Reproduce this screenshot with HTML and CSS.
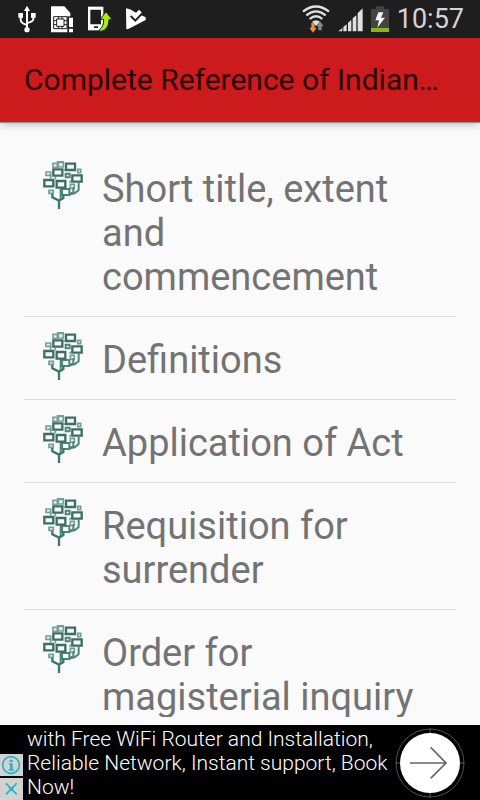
FILE: index.html
```html
<!DOCTYPE html>
<html lang="en">
<head>
<meta charset="utf-8">
<meta name="viewport" content="width=device-width, initial-scale=1">
<title>Complete Reference of Indian…</title>
<link rel="stylesheet" href="styles.css">
</head>
<body>
<svg class="defs" aria-hidden="true">
  <symbol id="tree" viewBox="36 33 126 144">
    <g fill="#f2f6f5" stroke="#739f94" stroke-width="5">
      <path d="M69 40h13v12H69zM85 37h15v14H85zM48 66h14v10H48zM57 121h13v9H57zM143 58h9v10h-9zM121 103h12v12h-12z"/>
      <path fill="none" d="M80 35h22M62 86V76M100 60h8M118 98l9-8M76 88V80"/>
    </g>
    <g fill="#fafafa" stroke="#4f8478" stroke-width="6">
      <path d="M107 71h12v11H107zM96 117h22v18H96z"/>
      <path fill="none" d="M92 113v34M118 132l12-5V112M146 98v22l-12 10-15 3"/>
    </g>
    <g fill="#fafafa" stroke="#3b6f63" stroke-width="7">
      <path d="M108 41h27v19H108zM70 58h27v19H70zM127 76h28v19H127zM43 90h27v19H43zM80 93h26v20H80z"/>
    </g>
    <path d="M87 177v-27M67 132v10l20 10 13-8v-12" fill="none" stroke="#3f766a" stroke-width="7"/>
  </symbol>
</svg>

<header class="status">
  <div class="status-group notices">
    <svg width="18" height="28" viewBox="0 0 54 84" aria-label="USB"><g fill="none" stroke="#fff" stroke-width="6"><path d="M27 12v62M8 34v10q0 10 19 16M46 34v8q0 8-19 12"/></g><path fill="#fff" d="M27 2l9 16H18zM1 24h14v14H1zM39 24h14v14H39z"/><circle cx="27" cy="74" r="8" fill="#fff"/></svg>
    <svg width="24" height="28" viewBox="0 0 72 84" aria-label="SIM card"><path fill="#fff" d="M3 4h40l18 20v58H3z"/><path fill="none" stroke="#1e1e1e" stroke-width="3" d="M11 35h40v36H11zM20 42h22v22H20zM11 47h9M11 59h9M42 47h9M42 59h9M26 35v7M36 35v7M26 64v7M36 64v7"/><path fill="#1e1e1e" d="M52 34h20v50H52z"/><path fill="#fff" d="M57 38h12v28H57zM57 71h12v11H57z"/></svg>
    <svg width="24" height="28" viewBox="0 0 72 84" aria-label="Device update"><path fill="#fff" d="M0 5h46v71H0z"/><path fill="#1e1e1e" d="M7 14h32v44H7zM18 64h12v5H18z"/><path fill="#a6f000" stroke="#1e1e1e" stroke-width="3" d="M54 20l18 23H63q0 31-24 36h-6l4-8q10-6 10-28H36z"/></svg>
    <svg width="22" height="28" viewBox="0 0 66 84" aria-label="Play check"><path fill="#fff" d="M0 10l12 3 18 10 9-9 8 8-4 7 16 8v8L7 72l-6 1z"/><path fill="none" stroke="#1e1e1e" stroke-width="6" d="M14 33l14 14 20-21"/></svg>
  </div>
  <div class="status-group system">
    <svg width="28" height="28" viewBox="0 0 84 84" aria-label="Wi-Fi"><g fill="none" stroke="#e0e0e0" stroke-width="7"><path d="M3 20q39-31 78 0M13 31q29-24 58 0M23 42q19-17 38 0"/></g><path fill="#e0e0e0" d="M30 50q12-9 24 0L42 63z"/><path fill="#e8943a" d="M28 54h10v14h6L33 83 22 68h6z"/><path fill="#888" d="M54 49l11 15h-6v12H49V64h-6z"/></svg>
    <svg width="25" height="28" viewBox="0 0 75 84" aria-label="Signal"><path fill="#e0e0e0" d="M1 79l12-10v10zM16 66l10-8v21H16zM30 53l10-8v34H30zM44 40l11-9v48H44zM59 25l15-15v69H59z"/></svg>
    <svg width="18" height="28" viewBox="0 0 54 84" aria-label="Battery charging"><path fill="#444" d="M15 4h24v8h15v58H0V12h15z"/><path fill="#84b818" d="M0 69h54v12H0z"/><path fill="#f4f4f4" d="M22 22h15l-7 16h12L19 68l5-22H13z"/></svg>
    <time class="clock">10:57</time>
  </div>
</header>

<div class="appbar"><h1>Complete Reference of Indian…</h1></div>

<main class="content">
  <ul class="list">
    <li><a class="row" href="#s1"><svg class="tree"><use href="#tree"/></svg><span>Short title, extent and commencement</span></a></li>
    <li><a class="row" href="#s2"><svg class="tree"><use href="#tree"/></svg><span>Definitions</span></a></li>
    <li><a class="row" href="#s3"><svg class="tree"><use href="#tree"/></svg><span>Application of Act</span></a></li>
    <li><a class="row" href="#s4"><svg class="tree"><use href="#tree"/></svg><span>Requisition for surrender</span></a></li>
    <li><a class="row" href="#s5"><svg class="tree"><use href="#tree"/></svg><span>Order for magisterial inquiry</span></a></li>
  </ul>
</main>

<aside class="ad">
  <div class="ad-controls">
    <button type="button" aria-label="Ad information"><svg width="23" height="22" viewBox="0 0 69 66"><circle cx="33" cy="33" r="25" fill="none" stroke="#28b4c4" stroke-width="5"/><path fill="#28b4c4" d="M29 17h9v7h-9zM27 28h11v18h4v4H26v-4h4V32h-3z"/></svg></button>
    <button type="button" aria-label="Close ad"><svg width="23" height="22" viewBox="0 0 69 66"><path d="M18 16l32 33M50 16L18 49" stroke="#28b4c4" stroke-width="5"/><path fill="#28b4c4" d="M28 27h12v12H28z"/></svg></button>
  </div>
  <p>with Free WiFi Router and Installation, Reliable Network, Instant support, Book Now!</p>
  <a class="go" href="#ad" aria-label="Open ad"><svg width="70" height="70" viewBox="0 0 210 210"><circle cx="105" cy="105" r="102" fill="none" stroke="#777" stroke-width="2"/><path d="M105 2v206M2 105h206" stroke="#888" stroke-width="2"/><circle cx="105" cy="105" r="90" fill="#fff"/><path d="M45 105h106M107 58l46 47-46 46" fill="none" stroke="#666" stroke-width="5"/></svg></a>
</aside>
</body>
</html>
```
FILE: styles.css
```css
* {
  box-sizing: border-box;
}

body {
  margin: 0;
  height: 100vh;
  display: flex;
  flex-direction: column;
  overflow: hidden;
  background: #fafafa;
  font-family: Roboto, "Liberation Sans", sans-serif;
}

svg {
  display: block;
  flex: none;
}

.defs {
  position: absolute;
  width: 0;
  height: 0;
}

.status {
  flex: none;
  height: 38px;
  padding: 0 16px 0 18px;
  display: flex;
  align-items: center;
  justify-content: space-between;
  background: #1e1e1e;
}

.status-group {
  display: flex;
  align-items: center;
}

.notices {
  gap: 14px;
}

.system {
  gap: 8px;
}

.clock {
  color: #d4d4d4;
  font-size: 27px;
  line-height: 38px;
}

.appbar {
  flex: none;
  height: 84px;
  padding: 0 24px;
  display: flex;
  align-items: center;
  background: #cc1a1d;
  box-shadow: 0 1px 1px #8a9a9d, 0 3px 8px rgba(0, 0, 0, 0.22);
}

.appbar h1 {
  margin: 0;
  width: 100%;
  overflow: hidden;
  text-overflow: ellipsis;
  white-space: nowrap;
  color: #290506;
  font-size: 30px;
  font-weight: 400;
  line-height: 36px;
}

.content {
  flex: 1;
  min-height: 0;
  padding: 24px 24px 8px;
  display: flex;
}

.list {
  flex: 1;
  margin: 0;
  padding: 0;
  overflow: hidden;
  list-style: none;
}

.list li {
  border-bottom: 1px solid #dcdcdc;
}

.row {
  display: flex;
  align-items: flex-start;
  gap: 18px;
  padding: 15px 18px 17px;
  color: #737373;
  font-size: 38px;
  line-height: 44px;
  text-decoration: none;
}

.row span {
  padding-top: 6px;
}

.tree {
  width: 42px;
  height: 48px;
}

.ad {
  flex: none;
  height: 75px;
  padding-right: 15px;
  display: flex;
  align-items: center;
  background: #000;
  color: #fff;
}

.ad-controls {
  align-self: flex-end;
  display: grid;
  gap: 2px;
}

.ad button {
  padding: 0;
  border: 0;
  background: #d2d2d2;
}

.ad p {
  flex: 1;
  margin: 0;
  padding-left: 4px;
  font-size: 21px;
  font-weight: 300;
  line-height: 24px;
}
```
